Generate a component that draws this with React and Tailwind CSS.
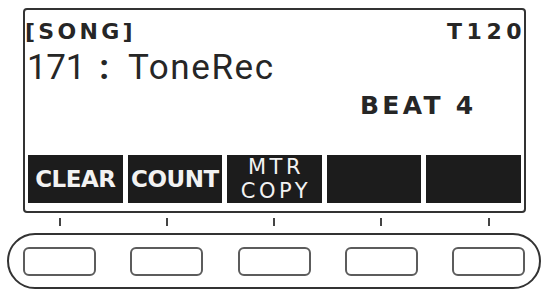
export default function App() {
  const dv = { fontFamily: '"DejaVu Sans", "Liberation Sans", sans-serif' };
  const rb = { fontFamily: 'Roboto, "Liberation Sans", sans-serif' };
  return (
    <div className="w-[548px] h-[295px] bg-white flex flex-col overflow-hidden">
      <div className="ml-[23px] mt-[8px] w-[503px] h-[205px] border-2 border-[#333] rounded-[4px] flex flex-col text-[#262626]">
        <div className="flex items-start pt-[11px] h-[33px]">
          <span style={dv} className="text-[22px] leading-[22px] font-bold tracking-[3.3px]">[SONG]</span>
          <span style={dv} className="ml-auto -mr-[2px] text-[22px] leading-[22px] font-bold tracking-[4.5px]">T120</span>
        </div>
        <div style={rb} className="mt-[7px] h-[35px] text-[35px] leading-[35px] flex pl-[2px] whitespace-nowrap">
          <span className="tracking-[-0.3px]">171</span>
          <span className="ml-[14px] font-bold">:</span>
          <span className="ml-[19px] tracking-[1.6px]">ToneRec</span>
        </div>
        <div className="mt-[8px] pl-[335px] h-[25px]">
          <span style={dv} className="text-[25px] leading-[25px] font-bold tracking-[3.3px] whitespace-nowrap">BEAT 4</span>
        </div>
        <div className="mt-auto mb-[8px] mx-[3px] h-[48px] flex gap-[5px]">
          <div className="flex-1 bg-[#1c1c1c] flex items-center justify-center">
            <span style={dv} className="text-[23px] leading-[23px] font-bold text-[#f2f2f2] tracking-[-0.5px]">CLEAR</span>
          </div>
          <div className="flex-1 bg-[#1c1c1c] flex items-center justify-center">
            <span style={dv} className="text-[23px] leading-[23px] font-bold text-[#f2f2f2] tracking-[-0.5px]">COUNT</span>
          </div>
          <div className="flex-1 bg-[#1c1c1c] flex flex-col items-center justify-center">
            <span style={dv} className="text-[21px] leading-[24px] text-[#f2f2f2] tracking-[3.5px] -mr-[3px]">MTR</span>
            <span style={dv} className="text-[21px] leading-[24px] text-[#f2f2f2] tracking-[3.5px] -mr-[3px]">COPY</span>
          </div>
          <div className="flex-1 bg-[#1c1c1c]" />
          <div className="flex-1 bg-[#1c1c1c]" />
        </div>
      </div>
      <div className="ml-[7px] w-[534px] mt-[5px] h-[8px] px-[16px] flex justify-between">
        {[0, 1, 2, 3, 4].map((i) => (
          <div key={i} className="w-[73px] flex justify-center">
            <div className="w-[2px] h-[8px] bg-[#444]" />
          </div>
        ))}
      </div>
      <div className="ml-[7px] mt-[7px] w-[534px] h-[56px] border-2 border-[#333] rounded-full px-[14px] flex items-center justify-between">
        {[0, 1, 2, 3, 4].map((i) => (
          <div key={i} className="w-[73px] h-[29px] border-2 border-[#5c5c5c] rounded-[6px]" />
        ))}
      </div>
    </div>
  );
}
